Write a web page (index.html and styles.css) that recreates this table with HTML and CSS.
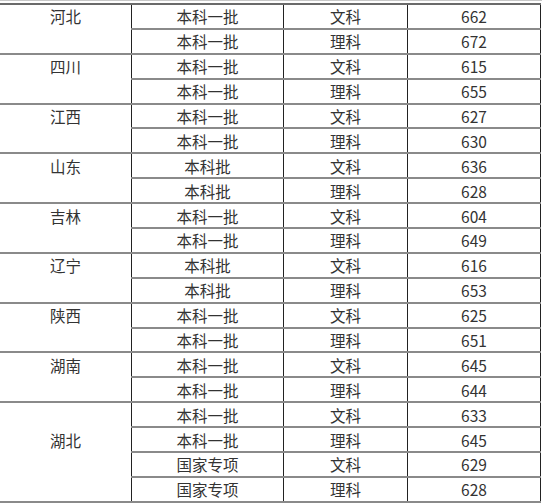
FILE: index.html
```html
<!DOCTYPE html>
<html lang="zh">
<head>
<meta charset="utf-8">
<link rel="stylesheet" href="styles.css">
</head>
<body>
<div class="frame">
<table class="scores">
<colgroup><col class="c1"><col class="c2"><col class="c3"><col class="c4"></colgroup>
<tbody>
<tr class="g"><td rowspan="2" class="prov">河北</td><td>本科一批</td><td>文科</td><td>662</td></tr>
<tr><td>本科一批</td><td>理科</td><td>672</td></tr>
<tr class="g"><td rowspan="2" class="prov">四川</td><td>本科一批</td><td>文科</td><td>615</td></tr>
<tr><td>本科一批</td><td>理科</td><td>655</td></tr>
<tr class="g"><td rowspan="2" class="prov">江西</td><td>本科一批</td><td>文科</td><td>627</td></tr>
<tr><td>本科一批</td><td>理科</td><td>630</td></tr>
<tr class="g"><td rowspan="2" class="prov">山东</td><td>本科批</td><td>文科</td><td>636</td></tr>
<tr><td>本科批</td><td>理科</td><td>628</td></tr>
<tr class="g"><td rowspan="2" class="prov">吉林</td><td>本科一批</td><td>文科</td><td>604</td></tr>
<tr><td>本科一批</td><td>理科</td><td>649</td></tr>
<tr class="g"><td rowspan="2" class="prov">辽宁</td><td>本科批</td><td>文科</td><td>616</td></tr>
<tr><td>本科批</td><td>理科</td><td>653</td></tr>
<tr class="g"><td rowspan="2" class="prov">陕西</td><td>本科一批</td><td>文科</td><td>625</td></tr>
<tr><td>本科一批</td><td>理科</td><td>651</td></tr>
<tr class="g"><td rowspan="2" class="prov">湖南</td><td>本科一批</td><td>文科</td><td>645</td></tr>
<tr><td>本科一批</td><td>理科</td><td>644</td></tr>
<tr class="g"><td rowspan="4" class="prov">湖北</td><td>本科一批</td><td>文科</td><td>633</td></tr>
<tr><td>本科一批</td><td>理科</td><td>645</td></tr>
<tr><td>国家专项</td><td>文科</td><td>629</td></tr>
<tr><td>国家专项</td><td>理科</td><td>628</td></tr>
</tbody>
</table>
</div>
</body>
</html>
```
FILE: styles.css
```css
html, body {
  margin: 0;
  padding: 0;
  background: #fff;
}
body {
  width: 542px;
  height: 504px;
  overflow: hidden;
  font-family: "Noto Sans CJK SC", "Noto Sans", sans-serif;
  color: #333;
}
.frame {
  border-top: 1px solid #c8c8c8;
  padding-top: 2px;
  border-bottom: 1px solid #cfcfcf;
  padding-bottom: 1px;
  width: 542px;
}
.scores {
  border-collapse: collapse;
  table-layout: fixed;
  margin-left: -1px;
  width: 541px;
  font-size: 15.5px;
}
.c1 { width: 132px; }
.c2 { width: 152px; }
.c3 { width: 124px; }
.c4 { width: 133px; }
.scores td {
  border-left: 1px solid #222;
  border-right: 1px solid #222;
  border-top: 2px solid #8a8a8a;
  border-bottom: 2px solid #8a8a8a;
  text-align: center;
  vertical-align: middle;
  height: 22.9px;
  padding: 0;
  line-height: 20px;
}
.scores tr.g td {
  border-top: 2px solid #6a6a6a;
}
.scores td.prov {
  padding-bottom: 24.9px;
}
```
